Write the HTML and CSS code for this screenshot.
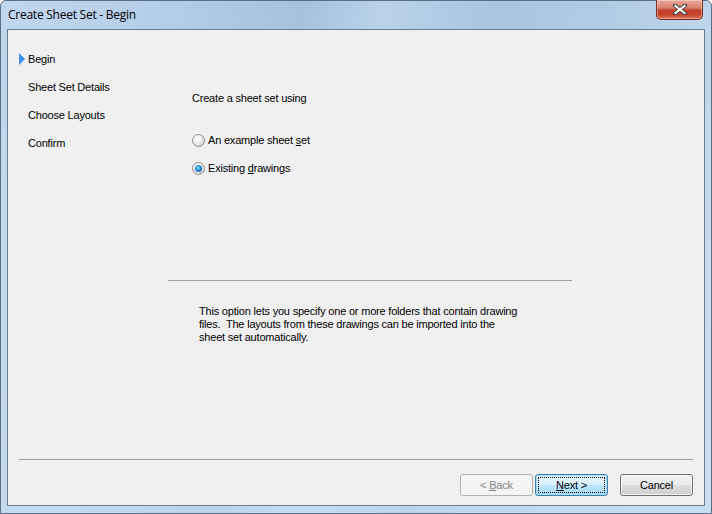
FILE: index.html
```html
<!DOCTYPE html>
<html lang="en">
<head>
    <meta charset="UTF-8">
    <title>Create Sheet Set - Begin</title>
    <link rel="stylesheet" href="styles.css">
</head>
<body>

    <div class="window">
        <div class="titlebar">
            <span class="title">Create Sheet Set - Begin</span>
            <button class="close" title="Close">
                <svg width="14" height="11" viewBox="0 0 14 11">
                    <path d="M2 1.5 L12 9.5 M12 1.5 L2 9.5" stroke="#3b3b3b" stroke-width="4" stroke-linecap="round"/>
                    <path d="M2.5 2 L11.5 9 M11.5 2 L2.5 9" stroke="#ffffff" stroke-width="2.2" stroke-linecap="square"/>
                </svg>
            </button>
        </div>

        <div class="client">
            <div class="main">
                <!-- Wizard steps -->
                <ul class="steps">
                    <li class="current">Begin</li>
                    <li>Sheet Set Details</li>
                    <li>Choose Layouts</li>
                    <li>Confirm</li>
                </ul>

                <!-- Step page -->
                <div class="page">
                    <p class="prompt">Create a sheet set using</p>
                    <label class="radio">
                        <span class="dot"></span><span>An example sheet <u>s</u>et</span>
                    </label>
                    <label class="radio">
                        <span class="dot checked"></span><span>Existing <u>d</u>rawings</span>
                    </label>
                    <div class="rule"></div>
                    <p class="desc">This option lets you specify one or more folders that contain drawing<br>files.&nbsp; The layouts from these drawings can be imported into the<br>sheet set automatically.</p>
                </div>
            </div>

            <div class="footer">
                <div class="separator"></div>
                <div class="buttons">
                    <button class="btn disabled">&lt; <u>B</u>ack</button>
                    <button class="btn default"><span class="focus"><u>N</u>ext &gt;</span></button>
                    <button class="btn cancel">Cancel</button>
                </div>
            </div>
        </div>
    </div>

</body>
</html>
```

FILE: styles.css
```css
html, body {
    margin: 0;
    padding: 0;
}
body {
    width: 712px;
    height: 514px;
    overflow: hidden;
    font-family: "Liberation Sans", Arial, sans-serif;
    font-size: 11px;
    letter-spacing: -0.2px;
    color: #000;
}
.window {
    box-sizing: border-box;
    width: 712px;
    height: 514px;
    display: flex;
    flex-direction: column;
    border: 1px solid #5a6f86;
    border-radius: 6px 6px 0 0;
    background:
        linear-gradient(to bottom, rgba(255,255,255,0) 0%, rgba(205,224,243,0.6) 100%),
        linear-gradient(100deg, #c0d7ee 0%, #b4cde8 20%, #a6c1de 38%, #b9d1ea 48%, #a9c4e0 62%, #b3cce6 78%, #c8ddf1 100%);
}
.titlebar {
    height: 28px;
    display: flex;
    align-items: flex-start;
    padding: 0 8px 0 7px;
}
.title {
    font-family: "Open Sans", "Noto Sans", sans-serif;
    font-size: 12px;
    line-height: 14px;
    margin-top: 7px;
    letter-spacing: -0.25px;
    color: #000;
}
.close {
    margin-left: auto;
    margin-top: -1px;
    width: 47px;
    height: 20px;
    padding: 0;
    border: 1px solid #7a2b1d;
    border-top: none;
    border-radius: 0 0 5px 5px;
    background: linear-gradient(to bottom, #e9a99b 0%, #d9816f 40%, #c2422c 55%, #c9472f 80%, #dc7a5f 100%);
    box-shadow: inset 0 0 0 1px rgba(255,255,255,0.35);
    display: flex;
    align-items: center;
    justify-content: center;
}
.client {
    flex: 1;
    margin: 0 6px 7px 6px;
    background: #f0f0f0;
    border: 1px solid #6e7b88;
    display: flex;
    flex-direction: column;
}
.main {
    flex: 1;
    display: flex;
}
.steps {
    list-style: none;
    margin: 0;
    padding: 15px 0 0 0;
    width: 160px;
}
.steps li {
    height: 28px;
    line-height: 28px;
    padding-left: 20px;
    position: relative;
}
.steps li.current::before {
    content: "";
    position: absolute;
    left: 11px;
    top: 8px;
    border-top: 6px solid transparent;
    border-bottom: 6px solid transparent;
    border-left: 6px solid #3d8ee8;
}
.page {
    width: 404px;
    padding-top: 61px;
}
.prompt {
    margin: 0 0 21px 0;
    padding-left: 24px;
    line-height: 14px;
}
.radio {
    display: flex;
    align-items: center;
    height: 28px;
    padding-left: 24px;
}
.dot {
    box-sizing: border-box;
    width: 13px;
    height: 13px;
    border-radius: 50%;
    border: 1px solid #8e8f8f;
    background: radial-gradient(circle at 40% 35%, #ffffff 0%, #eeeeee 40%, #c8c8c8 100%);
    margin-right: 3px;
    position: relative;
}
.dot.checked::after {
    content: "";
    position: absolute;
    left: 2px;
    top: 2px;
    width: 7px;
    height: 7px;
    border-radius: 50%;
    background: radial-gradient(circle at 45% 40%, #8fe0ff 0%, #2a8ad4 45%, #0d4a8a 100%);
}
.radio u, .btn u {
    text-decoration: underline;
    text-underline-offset: 1px;
}
.rule {
    height: 1px;
    background: #a0a0a0;
    margin-top: 98px;
}
.desc {
    margin: 24px 0 0 0;
    padding-left: 31px;
    line-height: 13px;
}
.footer {
    height: 46px;
}
.separator {
    height: 1px;
    background: #a0a0a0;
    margin: 0 11px 0 11px;
}
.buttons {
    display: flex;
    justify-content: flex-end;
    margin-top: 14px;
    padding-right: 11px;
}
.btn {
    box-sizing: border-box;
    width: 73px;
    height: 22px;
    padding: 0;
    font-family: "Liberation Sans", Arial, sans-serif;
    font-size: 11px;
    letter-spacing: -0.2px;
    color: #000;
    border: 1px solid #707070;
    border-radius: 3px;
    background: linear-gradient(to bottom, #f2f2f2 0%, #ebebeb 48%, #dddddd 52%, #cfcfcf 100%);
    box-shadow: inset 0 0 0 1px rgba(255,255,255,0.7);
}
.btn.disabled {
    color: #838383;
    border-color: #adb2b5;
    background: #f4f4f4;
    box-shadow: none;
}
.btn.default {
    margin-left: 2px;
    border-color: #3c7fb1;
    background: linear-gradient(to bottom, #eaf6fd 0%, #d9f0fc 48%, #bee6fd 52%, #a7d9f5 100%);
    box-shadow: inset 0 0 0 1px #a3dcf8;
    padding: 2px;
}
.focus {
    display: flex;
    align-items: center;
    justify-content: center;
    height: 100%;
    outline: 1px dotted #000;
    outline-offset: -1px;
}
.btn.cancel {
    margin-left: 12px;
}
```
